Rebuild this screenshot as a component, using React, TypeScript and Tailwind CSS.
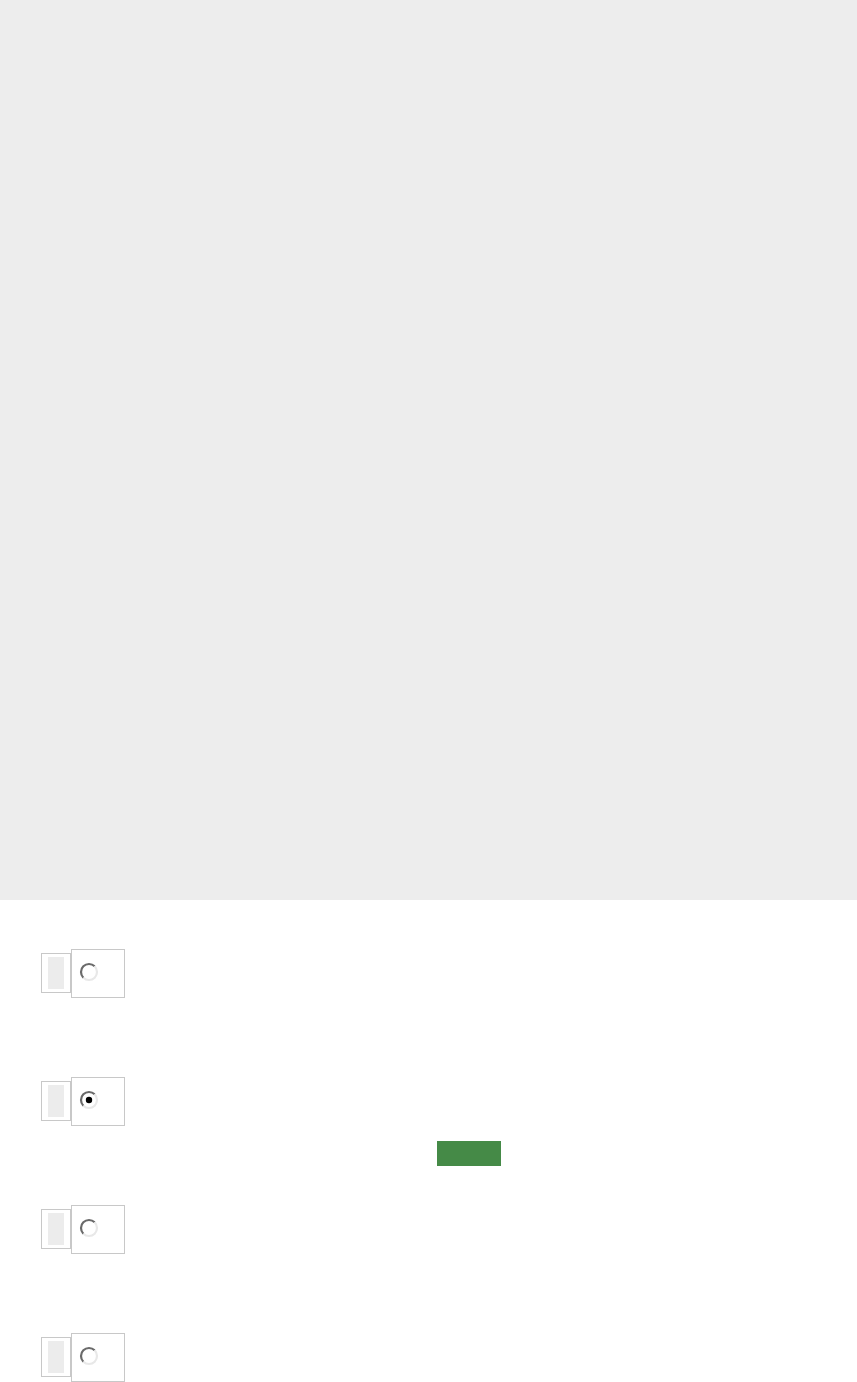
import React from 'react';

const Radio = ({ checked }: { checked?: boolean }) => (
  <svg width="20" height="20" viewBox="0 0 20 20" className="block">
    <circle cx="10" cy="10" r="8" fill="#fff" />
    <path d="M15.66 4.34 A8 8 0 0 0 4.34 15.66" fill="none" stroke="#6a6a6a" strokeWidth="2.2" />
    <path d="M4.34 15.66 A8 8 0 0 0 15.66 4.34" fill="none" stroke="#e8e8e8" strokeWidth="2.2" />
    {checked && <circle cx="10" cy="10" r="3.2" fill="#000" />}
  </svg>
);

const Row = ({ checked }: { checked?: boolean }) => (
  <div className="flex items-start ml-[41px]">
    <div className="mt-[4px] w-[30px] h-[40px] border border-[#c8c8c8] bg-white px-[6px] py-[3px]">
      <div className="w-full h-full bg-[#ececec]" />
    </div>
    <div className="w-[54px] h-[49px] border border-[#c8c8c8] bg-white pl-[7px] pt-[12px]">
      <Radio checked={checked} />
    </div>
  </div>
);

export default function App() {
  return (
    <div className="w-[857px] min-h-[1382px] bg-white font-['Liberation_Sans',sans-serif]">
      <div className="h-[900px] bg-[#ededed]" />
      <div className="pt-[49px] flex flex-col">
        <Row />
        <div className="h-[79px]" />
        <Row checked />
        <button className="mt-[15px] ml-[437px] w-[64px] h-[25px] bg-[#458a47]" />
        <div className="h-[39px]" />
        <Row />
        <div className="h-[79px]" />
        <Row />
      </div>
    </div>
  );
}
